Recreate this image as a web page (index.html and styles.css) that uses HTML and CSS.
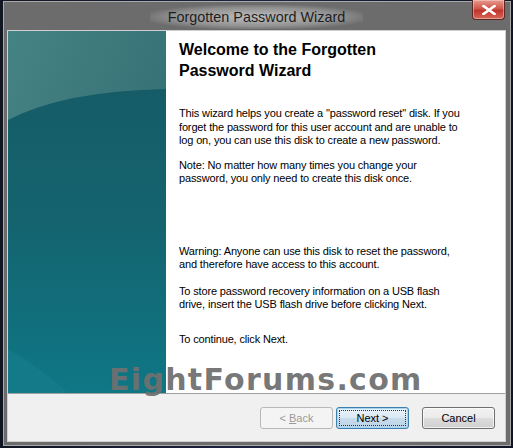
FILE: index.html
```html
<!DOCTYPE html>
<html>
<head>
<meta charset="utf-8">
<link rel="stylesheet" href="styles.css">
</head>
<body>
<div class="screen">
  <div class="frame">
    <div class="titlebar">
      <div class="spacer"></div>
      <div class="title"><span class="glow">Forgotten Password Wizard</span></div>
      <div class="controls">
        <div class="close">
          <svg width="14" height="10" viewBox="0 0 14 10"><path d="M1.5 1 L12.5 9 M12.5 1 L1.5 9" stroke="#fff" stroke-width="2.6" stroke-linecap="square"/></svg>
        </div>
      </div>
    </div>
    <div class="client">
      <div class="main">
        <div class="panel">
          <svg width="158" height="362" viewBox="0 0 158 362" preserveAspectRatio="none">
            <defs>
              <linearGradient id="top" x1="0" y1="0" x2="1" y2="1">
                <stop offset="0" stop-color="#468384"/>
                <stop offset="1" stop-color="#2c666c"/>
              </linearGradient>
              <linearGradient id="low" x1="0" y1="0" x2="0" y2="1">
                <stop offset="0" stop-color="#155c67"/>
                <stop offset="0.45" stop-color="#146470"/>
                <stop offset="1" stop-color="#0f7785"/>
              </linearGradient>
            </defs>
            <rect width="158" height="362" fill="url(#top)"/>
            <path d="M0 89 Q55 60 158 58 L158 362 L0 362 Z" fill="url(#low)"/>
            <path d="M0 318 Q30 335 60 362 L0 362 Z" fill="#1a8090" opacity="0.45"/>
          </svg>
        </div>
        <div class="content">
          <h1 class="heading">Welcome to the Forgotten<br>Password Wizard</h1>
          <p class="para p1">This wizard helps you create a "password reset" disk. If you<br>forget the password for this user account and are unable to<br>log on, you can use this disk to create a new password.</p>
          <p class="para p2">Note: No matter how many times you change your<br>password, you only need to create this disk once.</p>
          <p class="para p3">Warning: Anyone can use this disk to reset the password,<br>and therefore have access to this account.</p>
          <p class="para p4">To store password recovery information on a USB flash<br>drive, insert the USB flash drive before clicking Next.</p>
          <p class="para p5">To continue, click Next.</p>
        </div>
      </div>
      <div class="footer">
        <button class="btn back" disabled>&lt; <u>B</u>ack</button>
        <button class="btn next">Next &gt;</button>
        <button class="btn cancel">Cancel</button>
      </div>
    </div>
  </div>
  <div class="watermark">EightForums.com</div>
</div>
</body>
</html>
```
FILE: styles.css
```css
* { box-sizing: border-box; }
html, body { margin: 0; padding: 0; }
body { background: #161b2c; width: 513px; height: 448px; overflow: hidden; }

.screen {
  position: relative;
  width: 513px;
  height: 448px;
  padding: 1px 2px 2px 3px;
  background: linear-gradient(90deg, #121522 0%, #1d2240 50%, #101425 100%);
}

.frame {
  width: 508px;
  height: 445px;
  border: 1px solid #a9a9a9;
  background: #6c6c6c;
  padding: 0 4px 3px 3px;
  display: flex;
  flex-direction: column;
}

.titlebar {
  height: 28px;
  display: grid;
  grid-template-columns: 1fr auto 1fr;
  align-items: start;
}

.title {
  font-family: "Liberation Sans", Arial, sans-serif;
  font-size: 14.4px;
  color: #1e1e1e;
  line-height: 18px;
  padding-top: 6px;
}
.glow {
  display: inline-block;
  padding: 3px 18px;
  margin: -3px -18px;
  background: radial-gradient(ellipse at center, rgba(205,205,205,0.85) 0%, rgba(175,175,175,0.55) 55%, rgba(108,108,108,0) 78%);
}

.controls { display: flex; justify-content: flex-end; }
.close {
  width: 33px;
  height: 20px;
  margin-top: -2px;
  margin-right: 1px;
  border: 1px solid #5a2a26;
  border-top: none;
  border-radius: 0 0 4px 4px;
  background: linear-gradient(180deg, #e79a8e 0%, #d0564a 45%, #c0352a 55%, #d6685a 100%);
  display: flex;
  align-items: center;
  justify-content: center;
  box-shadow: inset 0 0 0 1px rgba(255,220,210,0.45);
}

.client {
  width: 499px;
  height: 412px;
  border: 1px solid #cfcfcf;
  background: #f0f0f0;
  display: flex;
  flex-direction: column;
}

.main {
  height: 362px;
  display: flex;
  background: #fff;
}
.panel {
  width: 158px;
  height: 362px;
  flex: none;
  border-right: 1px solid #d8d8d8;
}
.panel svg { display: block; }

.content {
  flex: 1;
  padding: 8px 0 0 13px;
  font-family: "Liberation Sans", Arial, sans-serif;
  color: #000;
}
.heading {
  margin: 0;
  font-size: 16px;
  font-weight: bold;
  line-height: 21px;
}
.para {
  margin: 0;
  font-size: 11px;
  line-height: 13.5px;
  letter-spacing: -0.15px;
}
.p1 { margin-top: 26px; }
.p2 { margin-top: 11px; }
.p3 { margin-top: 59px; }
.p4 { margin-top: 13px; }
.p5 { margin-top: 21px; }

.footer {
  flex: 1;
  border-top: 1px solid #a0a0a0;
  display: flex;
  align-items: flex-start;
  justify-content: flex-end;
  padding: 13px 10px 0 0;
}

.btn {
  width: 73px;
  height: 22px;
  font-family: "Liberation Sans", Arial, sans-serif;
  font-size: 11px;
  color: #000;
  border: 1px solid #707070;
  border-radius: 3px;
  background: linear-gradient(180deg, #f2f2f2 0%, #ebebeb 48%, #dddddd 52%, #cfcfcf 100%);
  box-shadow: inset 0 0 0 1px rgba(255,255,255,0.7);
  padding: 0;
}
.btn u { text-decoration: underline; }
.back {
  color: #9a9a9a;
  border-color: #b5b9bc;
  background: #f4f4f4;
  box-shadow: none;
}
.next {
  margin-left: 3px;
  border-color: #3c7fb1;
  background: linear-gradient(180deg, #eaf3fa 0%, #dbe9f4 48%, #c8dcec 52%, #bcd4e8 100%);
  box-shadow: inset 0 0 0 1px #a8d4f0;
  outline: 1px dotted #333;
  outline-offset: -4px;
}
.cancel { margin-left: 13px; }

.watermark {
  position: absolute;
  left: 109px;
  top: 362px;
  font-family: "DejaVu Sans", Verdana, sans-serif;
  font-weight: bold;
  font-size: 30px;
  line-height: 36px;
  color: rgba(112,112,112,0.95);
  letter-spacing: 1.3px;
}
```
